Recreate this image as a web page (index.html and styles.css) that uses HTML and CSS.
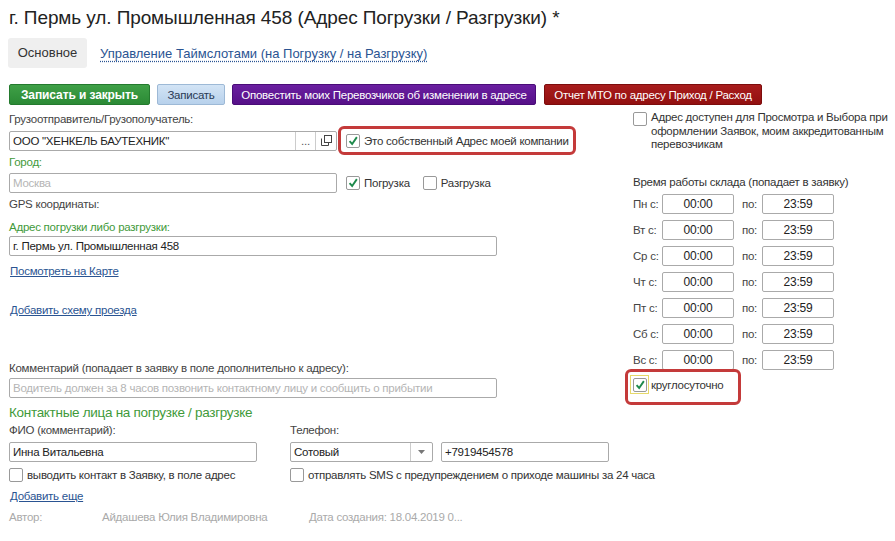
FILE: index.html
```html
<!DOCTYPE html>
<html lang="ru">
<head>
<meta charset="utf-8">
<link rel="stylesheet" href="styles.css">
</head>
<body>
<h1 class="title">г. Пермь ул. Промышленная 458 (Адрес Погрузки / Разгрузки) *</h1>
<div class="tabs">
  <span class="tab active">Основное</span>
  <a class="tab link-dotted">Управление Таймслотами (на Погрузку / на Разгрузку)</a>
</div>
<div class="toolbar">
  <button class="btn btn-green">Записать и закрыть</button>
  <button class="btn btn-blue">Записать</button>
  <button class="btn btn-purple">Оповестить моих Перевозчиков об изменении в адресе</button>
  <button class="btn btn-red">Отчет МТО по адресу Приход / Расход</button>
</div>
<div class="main">
  <div class="left">
    <div class="lbl">Грузоотправитель/Грузополучатель:</div>
    <div class="row r1">
      <div class="field w328 combo">
        <span class="val">ООО "ХЕНКЕЛЬ БАУТЕХНИК"</span>
        <span class="fbtn dots">...</span>
        <span class="fbtn"><svg width="11" height="11" viewBox="0 0 11 11"><rect x="3.5" y="0.5" width="7" height="7" fill="#fff" stroke="#444"/><path d="M0.5 3.5 V10.5 H7.5 V8" fill="none" stroke="#444"/></svg></span>
      </div>
      <div class="redbox rb1">
        <label class="chk"><span class="box"><svg viewBox="0 0 14 14" width="14" height="14"><path d="M3 7.2 L6 10.5 L11.5 2.5" fill="none" stroke="#1e8a4c" stroke-width="2.2"/></svg></span>Это собственный Адрес моей компании</label>
      </div>
    </div>
    <div class="lbl green">Город:</div>
    <div class="row r2">
      <div class="field w328 ph">Москва</div>
      <label class="chk c-pogr"><span class="box"><svg viewBox="0 0 14 14" width="14" height="14"><path d="M3 7.2 L6 10.5 L11.5 2.5" fill="none" stroke="#1e8a4c" stroke-width="2.2"/></svg></span>Погрузка</label>
      <label class="chk c-razg"><span class="box"></span>Разгрузка</label>
    </div>
    <div class="lbl gps">GPS координаты:</div>
    <div class="lbl green addr">Адрес погрузки либо разгрузки:</div>
    <div class="field w488 f3">г. Пермь ул. Промышленная 458</div>
    <a class="lnk map">Посмотреть на Карте</a>
    <a class="lnk scheme">Добавить схему проезда</a>
    <div class="lbl comment">Комментарий (попадает в заявку в поле дополнительно к адресу):</div>
    <div class="field w488 ph f4">Водитель должен за 8 часов позвонить контактному лицу и сообщить о прибытии</div>
    <div class="heading">Контактные лица на погрузке / разгрузке</div>
    <div class="row two lbls">
      <div class="col-a">ФИО (комментарий):</div>
      <div class="col-b">Телефон:</div>
    </div>
    <div class="row two inputs">
      <div class="col-a"><div class="field w248">Инна Витальевна</div></div>
      <div class="col-b phone">
        <div class="field sel"><span class="val">Сотовый</span><span class="fbtn arrow"><svg width="7" height="4" viewBox="0 0 7 4"><path d="M0 0 H7 L3.5 4 Z" fill="#777"/></svg></span></div>
        <div class="field tel">+7919454578</div>
      </div>
    </div>
    <div class="row two checks">
      <div class="col-a"><label class="chk"><span class="box"></span>выводить контакт в Заявку, в поле адрес</label></div>
      <div class="col-b"><label class="chk"><span class="box"></span>отправлять SMS с предупреждением о приходе машины за 24 часа</label></div>
    </div>
    <a class="lnk more">Добавить еще</a>
    <div class="footer">
      <span class="f-a">Автор:</span>
      <span class="f-b">Айдашева Юлия Владимировна</span>
      <span class="f-c">Дата создания: 18.04.2019 0...</span>
    </div>
  </div>
  <div class="right">
    <label class="chk access"><span class="box"></span><span>Адрес доступен для Просмотра и Выбора при оформлении Заявок, моим аккредитованным перевозчикам</span></label>
    <div class="lbl worktime">Время работы склада (попадает в заявку)</div>
    <div class="times">
      <div class="trow"><span class="day">Пн с:</span><span class="tf">00:00</span><span class="po">по:</span><span class="tf">23:59</span></div>
      <div class="trow"><span class="day">Вт с:</span><span class="tf">00:00</span><span class="po">по:</span><span class="tf">23:59</span></div>
      <div class="trow"><span class="day">Ср с:</span><span class="tf">00:00</span><span class="po">по:</span><span class="tf">23:59</span></div>
      <div class="trow"><span class="day">Чт с:</span><span class="tf">00:00</span><span class="po">по:</span><span class="tf">23:59</span></div>
      <div class="trow"><span class="day">Пт с:</span><span class="tf">00:00</span><span class="po">по:</span><span class="tf">23:59</span></div>
      <div class="trow"><span class="day">Сб с:</span><span class="tf">00:00</span><span class="po">по:</span><span class="tf">23:59</span></div>
      <div class="trow"><span class="day">Вс с:</span><span class="tf">00:00</span><span class="po">по:</span><span class="tf">23:59</span></div>
    </div>
    <div class="redbox rb2">
      <label class="chk"><span class="focus"><span class="box"><svg viewBox="0 0 14 14" width="14" height="14"><path d="M3 7.2 L6 10.5 L11.5 2.5" fill="none" stroke="#1e8a4c" stroke-width="2.2"/></svg></span></span>круглосуточно</label>
    </div>
  </div>
</div>
</body>
</html>
```

FILE: styles.css
```css
* { box-sizing: border-box; }
html, body { margin: 0; padding: 0; background: #fff; }
body {
  font-family: "Liberation Sans", Arial, sans-serif;
  font-size: 11.5px;
  letter-spacing: -0.25px;
  color: #444;
  width: 895px;
  height: 541px;
  overflow: hidden;
}
.title {
  margin: 0;
  padding: 6px 0 0 9px;
  font-size: 19px;
  letter-spacing: -0.1px;
  font-weight: normal;
  line-height: 24px;
  color: #222;
  height: 38px;
}
.tabs {
  display: flex;
  align-items: center;
  height: 30px;
  padding-left: 8px;
}
.tab { font-size: 13px; letter-spacing: 0; }
.tab.active {
  background: #efefef;
  border-radius: 3px;
  height: 30px;
  line-height: 30px;
  width: 79px;
  text-align: center;
  color: #333;
}
.link-dotted {
  margin-left: 13px;
  color: #2a5492;
  text-decoration: underline dotted;
  text-underline-offset: 3px;
}
.toolbar {
  display: flex;
  gap: 7px;
  padding: 16px 0 0 9px;
  height: 37px;
}
.btn {
  height: 21px;
  border: 1px solid transparent;
  border-radius: 2px;
  font-family: inherit;
  font-size: 11.5px;
  letter-spacing: -0.25px;
  white-space: nowrap;
  padding: 0;
  color: #fff;
}
.btn-green { width: 141px; background: linear-gradient(#3fa047, #2b8a35); border-color: #247a2e; font-weight: bold; font-size: 12px; letter-spacing: -0.1px; }
.btn-blue { width: 68px; background: linear-gradient(#d3e4f5, #b7d1ec); border-color: #9db9d6; color: #2a3a55; }
.btn-purple { width: 304px; background: linear-gradient(#6a1fa0, #561088); border-color: #4a0c78; }
.btn-red { width: 218px; margin-left: 1px; background: linear-gradient(#a81c1c, #921010); border-color: #7d0c0c; }

.main { display: flex; padding-top: 7px; }
.left { width: 625px; flex: none; padding-left: 9px; display: flex; flex-direction: column; align-items: flex-start; }
.right { width: 270px; display: flex; flex-direction: column; align-items: flex-start; }

.lbl { height: 14px; line-height: 14px; white-space: nowrap; }
.green { color: #3f9a3a; }
.row { display: flex; align-items: center; }

.field {
  height: 20px;
  border: 1px solid #aaa;
  border-radius: 2px;
  background: #fff;
  line-height: 18px;
  padding-left: 3px;
  color: #222;
  white-space: nowrap;
  overflow: hidden;
  display: flex;
}
.field.ph { color: #b5b5b5; }
.w328 { width: 328px; }
.w488 { width: 488px; }
.w248 { width: 248px; }
.combo { padding-left: 0; }
.combo .val, .sel .val { flex: 1; padding-left: 3px; }
.fbtn {
  width: 21px;
  border-left: 1px solid #ccc;
  display: flex;
  align-items: center;
  justify-content: center;
  color: #555;
}
.fbtn.dots { width: 20px; line-height: 14px; }

.r1 { height: 29px; }
.redbox {
  border: 3px solid #c43a3a;
  border-radius: 6px;
}
.rb1 { width: 238px; height: 29px; margin-left: 1px; display: flex; align-items: center; padding-left: 5px; }

.chk { display: flex; align-items: center; white-space: nowrap; color: #333; }
.box {
  width: 14px; height: 14px;
  border: 1px solid #999;
  border-radius: 2px;
  background: #fff;
  margin-right: 4px;
  display: inline-flex;
  align-items: center;
  justify-content: center;
  flex: none;
}
.box svg { display: block; }

.r2 { margin-top: 4px; }
.c-pogr { margin-left: 9px; }
.c-razg { margin-left: 13px; }
.gps { margin-top: 4px; }
.addr { margin-top: 9px; }
.f3 { margin-top: 2px; }
.lnk {
  display: block;
  height: 14px;
  line-height: 14px;
  color: #2a5492;
  text-decoration: underline;
  margin-left: 1px;
}
.map { margin-top: 8px; }
.scheme { margin-top: 25px; }
.comment { margin-top: 44px; }
.f4 { margin-top: 3px; }
.heading {
  margin-top: 6px;
  font-size: 13.5px;
  letter-spacing: -0.3px;
  line-height: 17px;
  height: 17px;
  color: #3f9a3a;
}
.two { width: 610px; }
.col-a { width: 281px; flex: none; }
.col-b { flex: 1; display: flex; }
.lbls { margin-top: 2px; height: 14px; line-height: 14px; }
.inputs { margin-top: 5px; }
.phone { gap: 8px; }
.sel { width: 143px; padding-left: 0; }
.arrow { width: 22px; }
.tel { width: 168px; }
.checks { margin-top: 6px; height: 14px; }
.more { margin-top: 7px; }
.footer {
  margin-top: 7px;
  height: 14px;
  line-height: 14px;
  color: #aaa;
  display: flex;
}
.f-a { width: 93px; }
.f-b { width: 207px; }

.access { align-items: flex-start; padding-left: 8px; margin-top: -1px; white-space: normal; }
.access .box { margin-top: 1px; }
.access span:last-child { width: 245px; line-height: 13.5px; }
.worktime { margin-top: 23px; padding-left: 8px; color: #333; }
.times { margin-top: 5px; padding-left: 8px; display: flex; flex-direction: column; gap: 6px; }
.trow { display: flex; align-items: center; height: 20px; line-height: 20px; }
.day { width: 29px; }
.po { width: 28px; padding-left: 8px; }
.tf {
  width: 72px; height: 20px;
  border: 1px solid #aaa;
  border-radius: 2px;
  text-align: center;
  line-height: 18px;
  color: #222;
  font-size: 12px;
}
.rb2 { width: 116px; height: 36px; margin-top: -1px; display: flex; align-items: center; padding-left: 2px; padding-bottom: 4px; }
.focus {
  width: 19px; height: 19px;
  border: 1px solid #e6d96a;
  display: inline-flex; align-items: center; justify-content: center;
  margin-right: 2px;
}
.focus .box { margin-right: 0; }
```
